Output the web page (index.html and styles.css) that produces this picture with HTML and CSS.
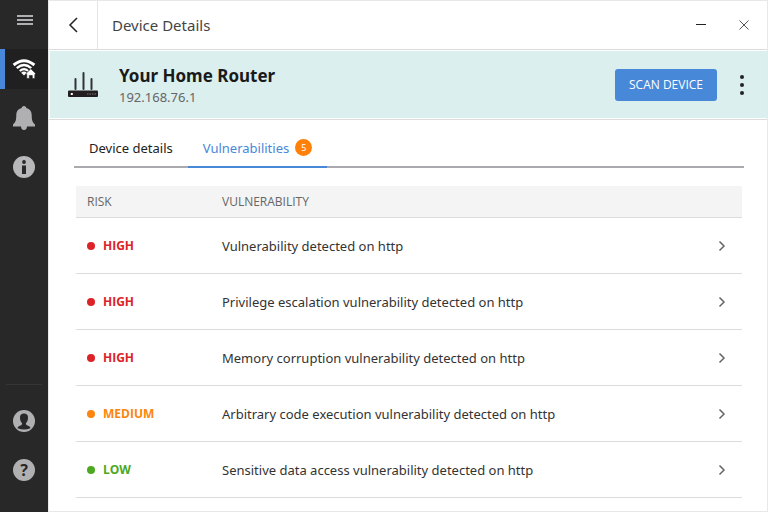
FILE: index.html
```html
<!DOCTYPE html>
<html lang="en">
<head>
    <meta charset="UTF-8">
    <meta name="viewport" content="width=device-width, initial-scale=1.0">
    <title>Device Details</title>
    <link rel="stylesheet" href="styles.css">
</head>
<body>
    <nav class="sidebar" aria-label="Main">
        <button class="side-item menu" aria-label="Menu">
            <svg width="16" height="10" viewBox="0 0 16 10"><path d="M0 1h16M0 5h16M0 9h16" stroke="#b0b0b3" stroke-width="2"/></svg>
        </button>
        <button class="side-item active" aria-label="Network">
            <svg width="24" height="22" viewBox="0 0 24 22">
                <path d="M1.600 7Q12 -1.600 22.400 7" fill="none" stroke="#fff" stroke-width="3"/>
                <path d="M4.800 10.200Q12 4 19.200 10.200" fill="none" stroke="#fff" stroke-width="2.400"/>
                <path d="M7.700 13Q12 9.300 16.300 13" fill="none" stroke="#fff" stroke-width="2"/>
                <path d="M9.200 14.800Q12 12.400 14.800 14.800L12 17.400z" fill="#fff"/>
                <path d="M18.800 10.800L23.600 15.400L22.800 16.800V20.500H20.300V17.500H17.300V20.500H14.800V16.800L14 15.400z" fill="#fff" stroke="#202020" stroke-width=".6"/>
            </svg>
        </button>
        <button class="side-item" aria-label="Notifications">
            <svg width="22" height="24" viewBox="0 0 22 24"><path d="M11 0C12.300 0 13.200.8 13.300 2C17 2.900 18.600 5.500 18.700 9C18.800 13.500 19 16 22 18.500V20.500H14Q13.700 24 11 24T8 20.500H0V18.500C3 16 3.200 13.500 3.300 9C3.400 5.500 5 2.900 8.700 2C8.800.8 9.700 0 11 0z" fill="#b0b0b3"/></svg>
        </button>
        <button class="side-item" aria-label="Information">
            <svg width="22" height="22" viewBox="0 0 22 22"><circle cx="11" cy="11" r="11" fill="#b8b8ba"/><circle cx="11" cy="6" r="1.900" fill="#282828"/><path d="M9 9.500H13V18H9z" fill="#282828"/></svg>
        </button>
        <div class="side-bottom">
            <button class="side-item" aria-label="Account">
                <svg width="22" height="22" viewBox="0 0 22 22"><circle cx="11" cy="11" r="11" fill="#b0b0b3"/><path d="M11 3.500C13.700 3.500 15.300 5.200 15 8C14.900 10.500 14 12.200 12.900 13.300C12.900 15.200 14 15.400 15.600 16C17 16.500 17.400 17.200 17.400 18.200Q11 21 4.600 18.200C4.600 17.200 5 16.500 6.400 16C8 15.400 9.100 15.200 9.100 13.300C8 12.200 7.100 10.500 7 8C6.700 5.200 8.300 3.500 11 3.500z" fill="#282828"/></svg>
            </button>
            <button class="side-item" aria-label="Help"><span class="help">?</span></button>
        </div>
    </nav>

    <main class="window">
        <header class="titlebar">
            <button class="back" aria-label="Back">
                <svg width="10" height="16" viewBox="0 0 10 16"><path d="M9 1L2 8L9 15" fill="none" stroke="#222" stroke-width="1.500"/></svg>
            </button>
            <h1>Device Details</h1>
            <div class="window-buttons">
                <button aria-label="Minimize"><svg width="10" height="10" viewBox="0 0 10 10"><path d="M0 4.500H10" stroke="#222"/></svg></button>
                <button aria-label="Close"><svg width="10" height="10" viewBox="0 0 10 10"><path d="M.5 .5L9.500 9.500M9.500 .5L.5 9.500" stroke="#555"/></svg></button>
            </div>
        </header>

        <section class="device">
            <svg class="router" width="30" height="26" viewBox="0 0 30 26">
                <path d="M7.500 7V17M15.500 1V17M23.500 7V17" stroke="#333" stroke-width="2" stroke-linecap="round"/>
                <rect y="18.500" width="30" height="6.500" rx="1" fill="#231f20"/>
                <rect x="2.800" y="21" width="2" height="2" fill="#fff"/>
                <path d="M19 22H28" stroke="#777" stroke-dasharray="1.500 1"/>
            </svg>
            <div class="device-name">
                <h2>Your Home Router</h2>
                <p>192.168.76.1</p>
            </div>
            <button class="scan">SCAN DEVICE</button>
            <button class="more" aria-label="More options">
                <svg width="4" height="20" viewBox="0 0 4 20" fill="#222"><circle cx="2" cy="2" r="2"/><circle cx="2" cy="10" r="2"/><circle cx="2" cy="18" r="2"/></svg>
            </button>
        </section>

        <nav class="tabs" aria-label="Device">
            <a href="#details">Device details</a>
            <a href="#vulnerabilities" class="selected">Vulnerabilities <span class="count">5</span></a>
        </nav>

        <div class="list" id="vulnerabilities">
            <table>
                <thead>
                    <tr><th class="risk-col">RISK</th><th>VULNERABILITY</th><th class="open-col"></th></tr>
                </thead>
                <tbody>
                    <tr>
                        <td><span class="risk high">HIGH</span></td>
                        <td>Vulnerability detected on http</td>
                        <td><button class="open" aria-label="Open"><svg width="8" height="12" viewBox="0 0 8 12"><path d="M1.500 1.500L6 6L1.500 10.500"/></svg></button></td>
                    </tr>
                    <tr>
                        <td><span class="risk high">HIGH</span></td>
                        <td>Privilege escalation vulnerability detected on http</td>
                        <td><button class="open" aria-label="Open"><svg width="8" height="12" viewBox="0 0 8 12"><path d="M1.500 1.500L6 6L1.500 10.500"/></svg></button></td>
                    </tr>
                    <tr>
                        <td><span class="risk high">HIGH</span></td>
                        <td>Memory corruption vulnerability detected on http</td>
                        <td><button class="open" aria-label="Open"><svg width="8" height="12" viewBox="0 0 8 12"><path d="M1.500 1.500L6 6L1.500 10.500"/></svg></button></td>
                    </tr>
                    <tr>
                        <td><span class="risk medium">MEDIUM</span></td>
                        <td>Arbitrary code execution vulnerability detected on http</td>
                        <td><button class="open" aria-label="Open"><svg width="8" height="12" viewBox="0 0 8 12"><path d="M1.500 1.500L6 6L1.500 10.500"/></svg></button></td>
                    </tr>
                    <tr>
                        <td><span class="risk low">LOW</span></td>
                        <td>Sensitive data access vulnerability detected on http</td>
                        <td><button class="open" aria-label="Open"><svg width="8" height="12" viewBox="0 0 8 12"><path d="M1.500 1.500L6 6L1.500 10.500"/></svg></button></td>
                    </tr>
                </tbody>
            </table>
        </div>
    </main>
</body>
</html>
```
FILE: styles.css
```css
* {
    box-sizing: border-box;
}
body {
    margin: 0;
    display: flex;
    min-height: 100vh;
    font-family: "Noto Sans", "Open Sans", sans-serif;
    font-size: 13px;
    line-height: 18px;
    color: #333;
    background: #fff;
}
h1, h2, p {
    margin: 0;
}
button {
    display: flex;
    align-items: center;
    justify-content: center;
    padding: 0;
    border: none;
    background: none;
    font: inherit;
    cursor: pointer;
}
svg {
    display: block;
}

/* sidebar */
.sidebar {
    display: flex;
    flex-direction: column;
    flex-shrink: 0;
    gap: 9px;
    width: 48px;
    background: #282828;
}
.side-item {
    width: 100%;
    height: 40px;
}
.menu {
    padding-left: 2px;
}
.side-item.active {
    background: #202020;
    border-left: 5px solid #4788d8;
    padding-right: 5px;
}
.side-bottom {
    display: flex;
    flex-direction: column;
    gap: 9px;
    margin: auto 6px 22px;
    padding-top: 16px;
    border-top: 1px solid #363636;
}
.help {
    width: 22px;
    height: 22px;
    border-radius: 50%;
    background: #b0b0b3;
    color: #282828;
    font-size: 16px;
    font-weight: bold;
    line-height: 22px;
}

/* window */
.window {
    flex: 1;
    min-width: 0;
    border: 1px solid #e8e8e8;
}
.titlebar {
    display: flex;
    align-items: center;
    height: 49px;
    border-bottom: 1px solid #dcdcdc;
}
.back {
    width: 49px;
    height: 100%;
    border-right: 1px solid #e4e4e4;
}
.titlebar h1 {
    margin-left: 14px;
    font-size: 15px;
    font-weight: normal;
    color: #444;
}
.window-buttons {
    display: flex;
    gap: 13px;
    margin-left: auto;
    padding-right: 8px;
}
.window-buttons button {
    width: 30px;
    height: 30px;
}

/* device banner */
.device {
    display: flex;
    align-items: center;
    height: 69px;
    padding: 0 15px 0 18px;
    background: #dbefee;
    border: 1px solid #fff;
    border-right: none;
    box-shadow: 0 1px 0 #dcdcdc;
}
.device-name {
    flex: 1;
    margin-left: 21px;
}
.device-name h2 {
    font-size: 17px;
    line-height: 24px;
    color: #1a1a1a;
}
.device-name p {
    color: #666;
}
.scan {
    width: 102px;
    height: 32px;
    border-radius: 3px;
    background: #4788d8;
    color: #fff;
    font-family: "Open Sans", "Noto Sans", sans-serif;
    font-size: 12px;
}
.more {
    width: 20px;
    height: 32px;
    margin-left: 15px;
}

/* tabs */
.tabs {
    display: flex;
    height: 49px;
    margin: 0 23px 18px 25px;
    box-shadow: inset 0 -2px 0 #aaaaae;
}
.tabs a {
    display: flex;
    align-items: center;
    gap: 6px;
    padding: 10px 15px 2px;
    color: #222;
    text-decoration: none;
}
.tabs .selected {
    padding-bottom: 0;
    color: #4788d8;
    border-bottom: 2px solid #4788d8;
}
.count {
    width: 17px;
    height: 17px;
    border-radius: 50%;
    background: #ff810a;
    color: #fff;
    font-size: 9px;
    line-height: 17px;
    text-align: center;
}

/* vulnerability list */
.list {
    padding: 0 25px 13px 27px;
}
table {
    width: 100%;
    border-collapse: separate;
    border-spacing: 0;
    table-layout: fixed;
}
th, td {
    padding: 0 0 0 11px;
    text-align: left;
    border-bottom: 1px solid #dcdcdc;
}
th {
    height: 32px;
    background: #f4f4f4;
    color: #666;
    font-family: "Open Sans", "Noto Sans", sans-serif;
    font-size: 12px;
    font-weight: normal;
}
td {
    height: 56px;
}
.risk-col {
    width: 135px;
}
.open-col {
    width: 41px;
}
.risk {
    display: flex;
    align-items: center;
    gap: 8px;
    font-family: "Open Sans", "Noto Sans", sans-serif;
    font-size: 12px;
    font-weight: bold;
}
.risk::before {
    content: "";
    width: 8px;
    height: 8px;
    border-radius: 50%;
    background: currentColor;
}
.high {
    color: #dc2327;
}
.medium {
    color: #fb850d;
}
.low {
    color: #4ca821;
}
.open {
    width: 20px;
    height: 30px;
}
.open path {
    fill: none;
    stroke: #666;
    stroke-width: 1.5;
}
```
